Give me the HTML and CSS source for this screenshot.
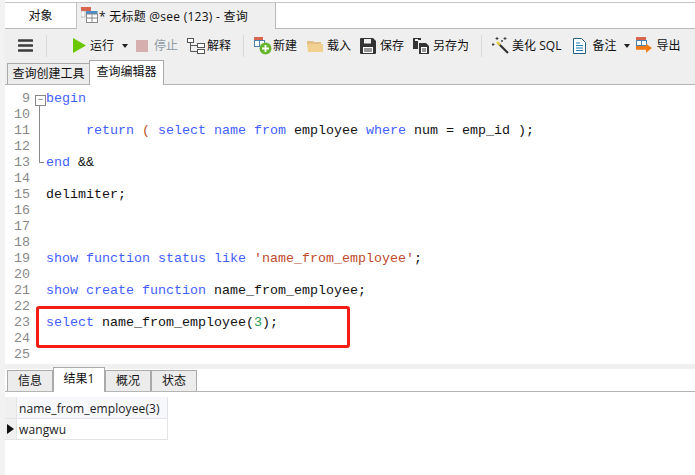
FILE: index.html
```html
<!DOCTYPE html>
<html lang="zh">
<head>
<meta charset="utf-8">
<title>无标题 @see (123) - 查询</title>
<link rel="stylesheet" href="styles.css">
</head>
<body>
<div class="app">
  <div class="doc-tabs">
    <div class="doc-tab doc-tab-plain">对象</div>
    <div class="doc-tab doc-tab-active">
      <svg class="ico-query" width="17" height="17" viewBox="0 0 17 17"><rect x="0" y="0" width="10" height="4" fill="#d9654f"/><rect x="0" y="4" width="4" height="6" fill="#fff" stroke="#999" stroke-width=".6"/><rect x="5" y="4" width="11.5" height="3" fill="#4a8fc9"/><rect x="5.5" y="7" width="11" height="8.5" fill="#fff" stroke="#888"/><path d="M11 7v8.5M5.500 11h11" stroke="#888"/></svg>
      <span class="doc-title">* 无标题 @see (123) - 查询</span>
    </div>
  </div>
  <div class="toolbar-area">
    <div class="toolbar">
      <button class="tool tool-menu" aria-label="菜单"><svg width="15" height="13" viewBox="0 0 15 13"><path d="M1 1.500h13M1 6.500h13M1 11.500h13" stroke="#3c3c3c" stroke-width="2.600" stroke-linecap="round"/></svg></button>
      <i class="sep sep-a"></i>
      <div class="tool tool-run"><svg width="15" height="15" viewBox="0 0 15 15"><path d="M1 0l13 7.500L1 15z" fill="#6ac700"/></svg><span>运行</span><i class="caret"></i></div>
      <div class="tool tool-stop"><i class="stop-box"></i><span>停止</span></div>
      <div class="tool tool-explain"><svg width="18" height="16" viewBox="0 0 18 16" fill="#fff" stroke="#555"><rect x=".5" y=".5" width="6" height="4"/><rect x="10.500" y="5.500" width="7" height="4"/><rect x="10.500" y="11.500" width="7" height="4"/><path d="M3.500 4.500v9h7M3.500 7.500h7" fill="none"/></svg><span>解释</span></div>
      <i class="sep sep-b"></i>
      <div class="tool tool-new"><svg width="18" height="18" viewBox="0 0 18 18"><rect x="0" y="0" width="9" height="3" fill="#d9654f"/><rect x=".5" y="3.500" width="10" height="6" fill="#fff" stroke="#4a7fae"/><path d="M5.500 3.500v6" stroke="#4a7fae"/><circle cx="11.500" cy="11.500" r="6" fill="#6ab52e"/><path d="M8 11.500h7M11.500 8v7" stroke="#fff" stroke-width="1.800"/></svg><span>新建</span></div>
      <div class="tool tool-load"><svg width="16" height="14" viewBox="0 0 16 14"><path d="M0 2h6l1 1h7v2H0z" fill="#e2c088"/><path d="M0 5h16v8H1z" fill="#f2d08f"/></svg><span>载入</span></div>
      <div class="tool tool-save"><svg width="16" height="16" viewBox="0 0 16 16"><path d="M1 0h12l3 3v12a1 1 0 0 1-1 1H1a1 1 0 0 1-1-1V1a1 1 0 0 1 1-1z" fill="#333"/><rect x="4" y="1" width="7" height="4.500" fill="#eee"/><rect x="3" y="9" width="10" height="6" fill="#fff"/><path d="M4 11h8M4 13h8" stroke="#333"/></svg><span>保存</span></div>
      <div class="tool tool-saveas"><svg width="16" height="16" viewBox="0 0 16 16"><path d="M0 0h8v2H5v9H0z" fill="#333"/><rect x="2" y="1" width="3" height="2" fill="#eee"/><path d="M6 5h7l3 3v8H6z" fill="#333"/><rect x="8" y="9" width="6" height="6" fill="#fff"/><path d="M9 11h4M9 13h4" stroke="#333"/></svg><span>另存为</span></div>
      <i class="sep sep-c"></i>
      <div class="tool tool-beautify"><svg width="17" height="17" viewBox="0 0 17 17"><path d="M6 6l10 10" stroke="#333" stroke-width="2.200"/><path d="M5 5l3 3" stroke="#e8d13a" stroke-width="2.200"/><path d="M5 0v3M3.500 1.500h3M13 0v3M11.500 1.500h3M1 6v3M-.5 7.500h3M10 3v2M9 4h2" stroke="#333" stroke-width=".9"/></svg><span>美化 SQL</span></div>
      <div class="tool tool-note"><svg width="13" height="16" viewBox="0 0 13 16"><path d="M.5.500h8l4 4v11H.5z" fill="#fff" stroke="#1f5f85"/><path d="M3 5h4M3 7.500h7M3 10h7M3 12.500h7" stroke="#1e7fb8" stroke-width="1.200"/></svg><span>备注</span><i class="caret"></i></div>
      <div class="tool tool-export"><svg width="16" height="17" viewBox="0 0 16 17"><rect x="0" y="0" width="10" height="3" fill="#d9654f"/><rect x=".5" y="3.500" width="10" height="5" fill="#fff" stroke="#4a7fae"/><path d="M5.500 3.500v5" stroke="#4a7fae"/><path d="M0 9h10V6.500L16 11l-6 5v-3H0z" fill="#f27a12" transform="translate(0 .5) scale(1 .95)"/></svg><span>导出</span></div>
    </div>
    <div class="sub-tabs">
      <div class="sub-tab">查询创建工具</div>
      <div class="sub-tab sub-tab-active">查询编辑器</div>
    </div>
  </div>
  <div class="editor">
    <div class="code"><span class="n">9</span><i class="f f-open"></i><span class="t"><span class="k">begin</span></span></div>
    <div class="code"><span class="n">10</span><i class="f f-line"></i></div>
    <div class="code"><span class="n">11</span><i class="f f-line"></i><span class="t">     <span class="k">return</span> <span class="p">(</span> <span class="k">select</span> <span class="k">name</span> <span class="k">from</span> employee <span class="k">where</span> num = emp_id );</span></div>
    <div class="code"><span class="n">12</span><i class="f f-line"></i></div>
    <div class="code"><span class="n">13</span><i class="f f-end"></i><span class="t"><span class="k">end</span> &amp;&amp;</span></div>
    <div class="code"><span class="n">14</span><i class="f"></i></div>
    <div class="code"><span class="n">15</span><i class="f"></i><span class="t">delimiter;</span></div>
    <div class="code"><span class="n">16</span><i class="f"></i></div>
    <div class="code"><span class="n">17</span><i class="f"></i></div>
    <div class="code"><span class="n">18</span><i class="f"></i></div>
    <div class="code"><span class="n">19</span><i class="f"></i><span class="t"><span class="k">show</span> <span class="k">function</span> <span class="k">status</span> <span class="k">like</span> <span class="s">'name_from_employee'</span>;</span></div>
    <div class="code"><span class="n">20</span><i class="f"></i></div>
    <div class="code"><span class="n">21</span><i class="f"></i><span class="t"><span class="k">show</span> <span class="k">create</span> <span class="k">function</span> name_from_employee;</span></div>
    <div class="code"><span class="n">22</span><i class="f"></i></div>
    <div class="code"><span class="n">23</span><i class="f"></i><span class="t"><span class="k">select</span> name_from_employee(<span class="d">3</span>);</span></div>
    <div class="code"><span class="n">24</span><i class="f"></i></div>
    <div class="code"><span class="n">25</span><i class="f"></i></div>
    <div class="highlight"></div>
  </div>
  <div class="result-tabs">
    <div class="r-tab">信息</div>
    <div class="r-tab r-tab-active">结果1</div>
    <div class="r-tab r-tab-c">概况</div>
    <div class="r-tab r-tab-d">状态</div>
  </div>
  <div class="results">
    <div class="row row-head">
      <div class="marker"></div>
      <div class="cell cell-head">name_from_employee(3)</div>
    </div>
    <div class="row">
      <div class="marker"><i class="arrow"></i></div>
      <div class="cell">wangwu</div>
    </div>
  </div>
</div>
</body>
</html>
```
FILE: styles.css
```css
* { box-sizing: border-box; }
html, body { margin: 0; padding: 0; }
body {
  width: 695px; height: 475px; overflow: hidden; background: #fff; color: #111;
  font-family: "Open Sans", "Noto Sans CJK SC", sans-serif; font-size: 12px;
}
.app { height: 475px; background: #fff; border-left: 5px solid #f2f2f2; display: flex; flex-direction: column; }
.doc-tabs { height: 27px; margin-top: 2px; display: flex; border-top: 1px solid #c4c4c4; border-bottom: 1px solid #b9b9b9; flex: none; }
.doc-tab { height: 25px; display: flex; align-items: center; line-height: 16px; padding-top: 1px; }
.doc-tab-plain { width: 71px; justify-content: center; background: #fff; }
.doc-tab-active { width: 200px; height: 26px; background: #efefef; border-left: 1px solid #c4c4c4; border-right: 1px solid #b9b9b9; padding-left: 4px; gap: 1px; position: relative; }
.doc-title { letter-spacing: .25px; }
.ico-query { margin-top: -2px; }
.toolbar-area { height: 56px; background: #efefef; border-bottom: 1px solid #b5b5b5; display: flex; flex-direction: column; justify-content: space-between; flex: none; }
.toolbar { height: 31px; padding-top: 3px; display: flex; align-items: center; white-space: nowrap; }
.tool { display: flex; align-items: center; line-height: 16px; }
.tool-menu { border: 0; background: none; padding: 0; margin-left: 13px; }
.sep { width: 1px; height: 22px; background: #d9d9d9; }
.sep-a { margin-left: 13px; }
.tool-run { margin-left: 25px; gap: 3px; }
.caret { width: 0; height: 0; border: 3px solid transparent; border-top: 4px solid #222; border-bottom: 0; margin-left: 5px; }
.tool-stop { margin-left: 8px; gap: 6px; color: #8c9aa3; }
.stop-box { width: 12px; height: 12px; background: #d6aeae; }
.tool-explain { margin-left: 9px; gap: 2px; }
.sep-b { margin-left: 12px; }
.tool-new { margin-left: 10px; gap: 1px; }
.tool-load { margin-left: 10px; gap: 4px; }
.tool-save { margin-left: 9px; gap: 4px; }
.tool-saveas { margin-left: 9px; gap: 4px; }
.sep-c { margin-left: 12px; }
.tool-beautify { margin-left: 10px; gap: 3px; }
.tool-note { margin-left: 12px; gap: 6px; }
.tool-note .caret { margin-left: 2px; }
.tool-export { margin-left: 6px; gap: 4px; }
.sub-tabs { height: 25px; display: flex; align-items: flex-end; padding-left: 2px; }
.sub-tab { height: 21px; width: 83px; background: #ececec; border: 1px solid #aaa; border-bottom: 0; text-align: center; line-height: 20px; }
.sub-tab-active { width: 75px; height: 25px; background: #fff; margin-bottom: -1px; margin-left: -1px; line-height: 22px; position: relative; }
.editor { position: relative; height: 284px; padding-top: 6px; background: #fff; border-bottom: 5px solid #f0f0f0; overflow: hidden; flex: none; }
.code { height: 16px; line-height: 16px; display: flex; white-space: pre; font-family: "Liberation Mono", monospace; font-size: 13.330px; color: #111; }
.t { white-space: pre; }
.n { width: 25px; margin-right: 4px; text-align: right; color: #888; flex: none; }
.f { width: 12px; height: 16px; flex: none; position: relative; }
.f-line::before, .f-open::after, .f-end::before { content: ""; position: absolute; left: 5px; top: 0; bottom: 0; width: 1px; background: #888; }
.f-open::before { content: "−"; position: absolute; left: 1px; top: 4px; width: 9px; height: 9px; border: 1px solid #888; background: #fff; z-index: 1; font-size: 9px; line-height: 7px; text-align: center; color: #555; font-family: "Liberation Sans", sans-serif; }
.f-open::after { top: 12px; }
.f-end::before { bottom: 8px; }
.f-end::after { content: ""; position: absolute; left: 5px; top: 7px; width: 5px; height: 1px; background: #888; }
.k { color: #3f5fff; }
.p { color: #b5561d; }
.s { color: #c04a2a; }
.d { color: #2a9a4a; }
.highlight { position: absolute; left: 31px; top: 221px; width: 314px; height: 42px; border: 3px solid #f41c14; border-radius: 3px; }
.result-tabs { height: 23px; display: flex; align-items: flex-end; padding-left: 2px; background: #fff; border-bottom: 1px solid #b5b5b5; flex: none; }
.r-tab { width: 46px; height: 21px; background: #ececec; border: 1px solid #aaa; border-bottom: 0; text-align: center; line-height: 19px; }
.r-tab-active { width: 52px; height: 25px; background: #fff; margin-bottom: -1px; line-height: 21px; position: relative; }
.r-tab-c { width: 46px; }
.r-tab-d { width: 46px; }
.results { padding-top: 5px; flex: 1; }
.row { display: flex; height: 21px; }
.row-head { height: 22px; }
.marker { width: 12px; background: #f0f0f0; border-bottom: 1px solid #e4e4e4; border-right: 1px solid #e4e4e4; display: flex; align-items: center; justify-content: center; }
.arrow { width: 0; height: 0; border-left: 7px solid #111; border-top: 5px solid transparent; border-bottom: 5px solid transparent; }
.cell { width: 151px; padding-left: 2px; line-height: 21px; border-right: 1px solid #e4e4e4; border-bottom: 1px solid #e4e4e4; font-family: "Open Sans", sans-serif; font-size: 12px; letter-spacing: .1px; color: #222; }
.cell-head { background: #f6f8fc; line-height: 23px; }
```
